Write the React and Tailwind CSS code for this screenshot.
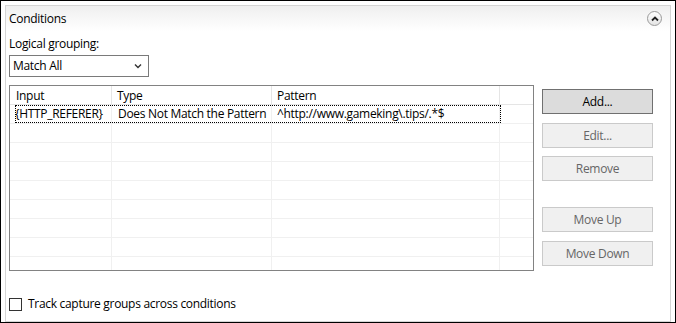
import { useState } from 'react';

const rows = [
  { input: '{HTTP_REFERER}', type: 'Does Not Match the Pattern', pattern: '^http://www.gameking\\.tips/.*$' },
];

function CollapseIcon() {
  return (
    <span className="flex h-[15px] w-[15px] items-center justify-center rounded-full border border-[#9a9a9a] bg-gradient-to-b from-white to-[#e4e4e4]">
      <svg width="8" height="6" viewBox="0 0 8 6">
        <path d="M1 4.5 L4 1.5 L7 4.5" fill="none" stroke="#222" strokeWidth="1.8" />
      </svg>
    </span>
  );
}

function ActionButton({ children, primary, disabled }) {
  return (
    <button
      className={
        primary
          ? 'h-[25px] w-[111px] border border-[#707070] bg-[#dcdcdc] text-black'
          : 'h-[25px] w-[111px] border border-[#cacaca] bg-[#f0f0f0] text-[#666]'
      }
      disabled={disabled}
    >
      {children}
    </button>
  );
}

export default function App() {
  const [trackGroups, setTrackGroups] = useState(false);
  const emptyRows = [0, 1, 2, 3, 4, 5, 6, 7];

  return (
    <div
      className="h-[323px] w-[676px] overflow-hidden border border-black bg-white pl-[4px] pr-[4px] pt-[4px] text-[12px] leading-[16px] tracking-[-0.3px] whitespace-nowrap text-black"
      style={{ fontFamily: '"Segoe UI", "Open Sans", sans-serif' }}
    >
      <div className="flex h-[317px] flex-col border border-[#d5d5d5]">
        {/* Section header */}
        <div className="flex h-[25px] items-center justify-between bg-gradient-to-b from-[#efefef] to-white pl-[3px] pr-[8px]">
          <span>Conditions</span>
          <CollapseIcon />
        </div>

        <div className="flex flex-1 flex-col pl-[3px]">
          <div className="mt-[5px]">Logical grouping:</div>

          <div className="mt-[3px] flex h-[22px] w-[140px] items-center justify-between border border-[#7a7a7a] bg-white pl-[3px] pr-[6px]">
            <span>Match All</span>
            <svg width="8" height="6" viewBox="0 0 8 6">
              <path d="M1 1.5 L4 4.5 L7 1.5" fill="none" stroke="#333" strokeWidth="1.4" />
            </svg>
          </div>

          <div className="mt-[8px] flex gap-[8px]">
            {/* Conditions grid */}
            <div className="h-[186px] w-[525px] overflow-hidden border border-[#828282] bg-white">
              <div className="flex h-[19px] items-center border-b border-[#e5e5e5]">
                <div className="h-full w-[102px] border-r border-[#e5e5e5] pl-[6px] leading-[19px]">Input</div>
                <div className="h-full w-[160px] border-r border-[#e5e5e5] pl-[5px] leading-[19px]">Type</div>
                <div className="h-full w-[228px] border-r border-[#e5e5e5] pl-[5px] leading-[19px]">Pattern</div>
                <div className="h-full flex-1" />
              </div>

              {rows.map((row) => (
                <div key={row.input} className="relative flex h-[19px] border-b border-[#f0f0f0]">
                  <div className="h-full w-[102px] border-r border-[#f0f0f0] pl-[5px] leading-[18px]">{row.input}</div>
                  <div className="h-full w-[160px] border-r border-[#f0f0f0] pl-[6px] leading-[18px]">{row.type}</div>
                  <div className="h-full w-[228px] border-r border-[#f0f0f0] pl-[5px] leading-[18px]">{row.pattern}</div>
                  <div className="h-full flex-1" />
                  <div className="pointer-events-none absolute left-[5px] top-0 h-[18px] w-[486px] border border-dotted border-black" />
                </div>
              ))}

              {emptyRows.map((i) => (
                <div key={i} className="flex h-[19px] border-b border-[#f0f0f0]">
                  <div className="h-full w-[102px] border-r border-[#f0f0f0]" />
                  <div className="h-full w-[160px] border-r border-[#f0f0f0]" />
                  <div className="h-full w-[228px] border-r border-[#f0f0f0]" />
                  <div className="h-full flex-1" />
                </div>
              ))}
            </div>

            {/* Action buttons */}
            <div className="flex flex-col pt-[4px]">
              <ActionButton primary>Add...</ActionButton>
              <div className="mt-[9px]">
                <ActionButton disabled>Edit...</ActionButton>
              </div>
              <div className="mt-[8px]">
                <ActionButton disabled>Remove</ActionButton>
              </div>
              <div className="mt-[26px]">
                <ActionButton disabled>Move Up</ActionButton>
              </div>
              <div className="mt-[9px]">
                <ActionButton disabled>Move Down</ActionButton>
              </div>
            </div>
          </div>

          <label className="mt-[25px] flex items-center gap-[6px]">
            <input
              type="checkbox"
              checked={trackGroups}
              onChange={() => setTrackGroups(!trackGroups)}
              className="h-[13px] w-[13px] appearance-none border border-[#333] bg-white"
            />
            <span>Track capture groups across conditions</span>
          </label>
        </div>
      </div>
    </div>
  );
}
